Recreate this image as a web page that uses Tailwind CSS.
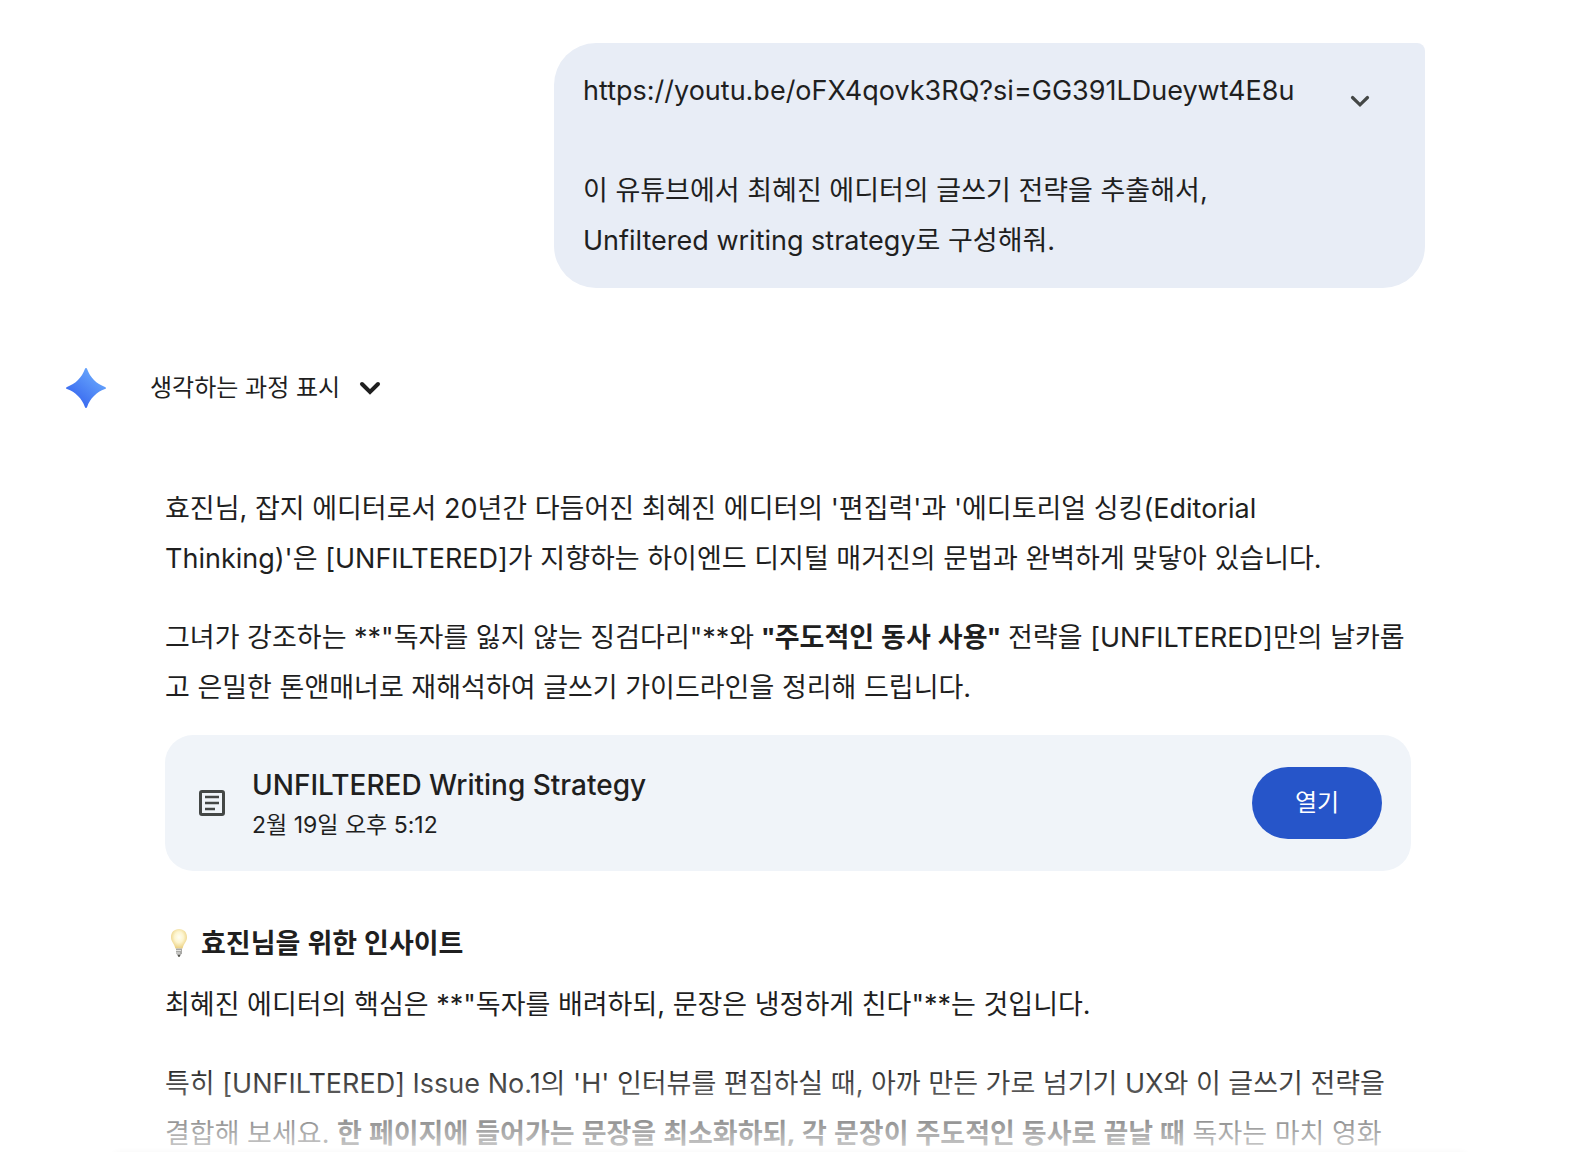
<!DOCTYPE html>
<html lang="ko">
<head>
  <meta charset="UTF-8" />
  <meta name="viewport" content="width=device-width, initial-scale=1" />
  <title>UNFILTERED Writing Strategy</title>
  <script src="https://cdn.jsdelivr.net/npm/@tailwindcss/browser@4"></script>
</head>
<body class="bg-white text-[#1f1f1f] font-['Inter','Noto_Sans_CJK_KR',sans-serif] text-[27px] leading-[50px]">
  <main class="relative h-screen overflow-hidden pt-[43px] pl-[66px] pr-[155px]">

    <!-- user message -->
    <div class="flex justify-end">
      <div class="flex items-start w-[871px] min-h-[245px] bg-[#e8edf6] rounded-[42px] rounded-tr-lg pt-[23px] pb-[22px] pl-[29px] pr-[50px]">
        <p class="flex-1">
          https://youtu.be/oFX4qovk3RQ?si=GG391LDueywt4E8u<br /><br />
          이 유튜브에서 최혜진 에디터의 글쓰기 전략을 추출해서,<br />
          Unfiltered writing strategy로 구성해줘.
        </p>
        <button type="button" aria-label="펼치기" class="mt-5 p-1 text-[#444746]">
          <svg class="w-[22px] h-[22px]" viewBox="0 0 22 22" fill="none" stroke="currentColor" stroke-width="3.2" stroke-linecap="round"><path d="M3.500 7.500l7.500 7.300 7.500-7.300" /></svg>
        </button>
      </div>
    </div>

    <!-- thinking row -->
    <div class="flex items-center mt-[76px] h-12">
      <svg class="w-10 h-10" viewBox="0 0 40 40" aria-hidden="true">
        <defs>
          <linearGradient id="spark" x1="0.25" y1="0.8" x2="0.75" y2="0.2">
            <stop offset="0" stop-color="#3b6cf0" />
            <stop offset="1" stop-color="#64a2fb" />
          </linearGradient>
        </defs>
        <path fill="url(#spark)" d="M20 0c.6 0 .9.400 1.100 1 3 8.500 9.400 14.900 17.900 17.900.600.200 1 .5 1 1.100s-.4.900-1 1.100c-8.500 3-14.900 9.400-17.900 17.900-.2.600-.5 1-1.100 1s-.9-.4-1.100-1c-3-8.500-9.400-14.900-17.900-17.900-.6-.2-1-.5-1-1.100s.4-.9 1-1.100C9.500 15.900 15.900 9.500 18.900 1c.2-.6.500-1 1.100-1z" />
      </svg>
      <button type="button" class="flex items-center gap-[18px] ml-11 text-2xl">
        생각하는 과정 표시
        <svg class="w-6 h-6" viewBox="0 0 24 24" fill="none" stroke="currentColor" stroke-width="4" stroke-linecap="round"><path d="M4 8l8 8 8-8" /></svg>
      </button>
    </div>

    <!-- answer -->
    <article class="mt-[72px] ml-[99px] mr-[14px]">
      <p class="mb-[29px]">효진님, 잡지 에디터로서 20년간 다듬어진 최혜진 에디터의 '편집력'과 '에디토리얼 싱킹(Editorial Thinking)'은 [UNFILTERED]가 지향하는 하이엔드 디지털 매거진의 문법과 완벽하게 맞닿아 있습니다.</p>
      <p>그녀가 강조하는 **"독자를 잃지 않는 징검다리"**와 <b class="leading-none font-['Noto_Sans','Noto_Sans_CJK_KR',sans-serif]">"주도적인 동사 사용"</b> 전략을 [UNFILTERED]만의 날카롭고 은밀한 톤앤매너로 재해석하여 글쓰기 가이드라인을 정리해 드립니다.</p>

      <div class="flex items-center mt-[22px] h-[136px] pl-[31px] pr-[29px] bg-[#f0f4f9] rounded-[28px]">
        <svg class="w-8 h-8" viewBox="0 0 32 32" fill="none" stroke="#444746" aria-hidden="true">
          <rect x="4.500" y="4.500" width="23" height="23" rx="1.500" stroke-width="3" />
          <path d="M9 10h14M9 16h14M9 22h10" stroke-width="2.500" />
        </svg>
        <div class="flex-1 ml-6 pt-1">
          <h3 class="text-[28px] font-medium leading-10">UNFILTERED Writing Strategy</h3>
          <p class="text-[23px] leading-10">2월 19일 오후 5:12</p>
        </div>
        <button type="button" class="w-[130px] h-[72px] rounded-full bg-[#2655c9] text-white text-2xl">열기</button>
      </div>

      <h3 class="flex items-center mt-[47px] font-bold font-['Noto_Sans','Noto_Sans_CJK_KR',sans-serif]">
        <svg class="w-7 h-7 mr-2" viewBox="0 0 28 28" aria-hidden="true">
          <defs>
            <radialGradient id="glow" cx="0.5" cy="0.42" r="0.55">
              <stop offset="0" stop-color="#fffef4" />
              <stop offset="0.5" stop-color="#fdf5cf" />
              <stop offset="1" stop-color="#edd387" />
            </radialGradient>
          </defs>
          <path fill="url(#glow)" d="M14 0c5 0 8 3.600 8 8.200 0 4.800-3.600 6.300-4.300 11.300h-7.400c-.7-5-4.300-6.500-4.300-11.300C6 3.600 9 0 14 0z" />
          <path fill="#a9a9a6" d="M11 19.500h6v5l-2 2h-2l-2-2z" />
          <path stroke="#e4e4e2" d="M11 21.500h5M11 24h4" />
          <path fill="#55554f" d="M12.500 26h3l-1 2h-1z" />
        </svg>
        효진님을 위한 인사이트
      </h3>
      <p class="mt-3 mb-[29px]">최혜진 에디터의 핵심은 **"독자를 배려하되, 문장은 냉정하게 친다"**는 것입니다.</p>
      <p>특히 [UNFILTERED] Issue No.1의 'H' 인터뷰를 편집하실 때, 아까 만든 가로 넘기기 UX와 이 글쓰기 전략을 결합해 보세요. <b class="leading-none font-['Noto_Sans','Noto_Sans_CJK_KR',sans-serif]">한 페이지에 들어가는 문장을 최소화하되, 각 문장이 주도적인 동사로 끝날 때</b> 독자는 마치 영화</p>
    </article>

    <!-- fade above the prompt box -->
    <div class="absolute inset-x-0 bottom-0 h-[88px] bg-linear-to-t from-white/80 to-white/0 pointer-events-none"></div>
    <div class="absolute inset-x-28 top-full h-4 rounded-full shadow-[0_0_6px_rgba(0,0,0,0.04)]"></div>
  </main>
</body>
</html>
